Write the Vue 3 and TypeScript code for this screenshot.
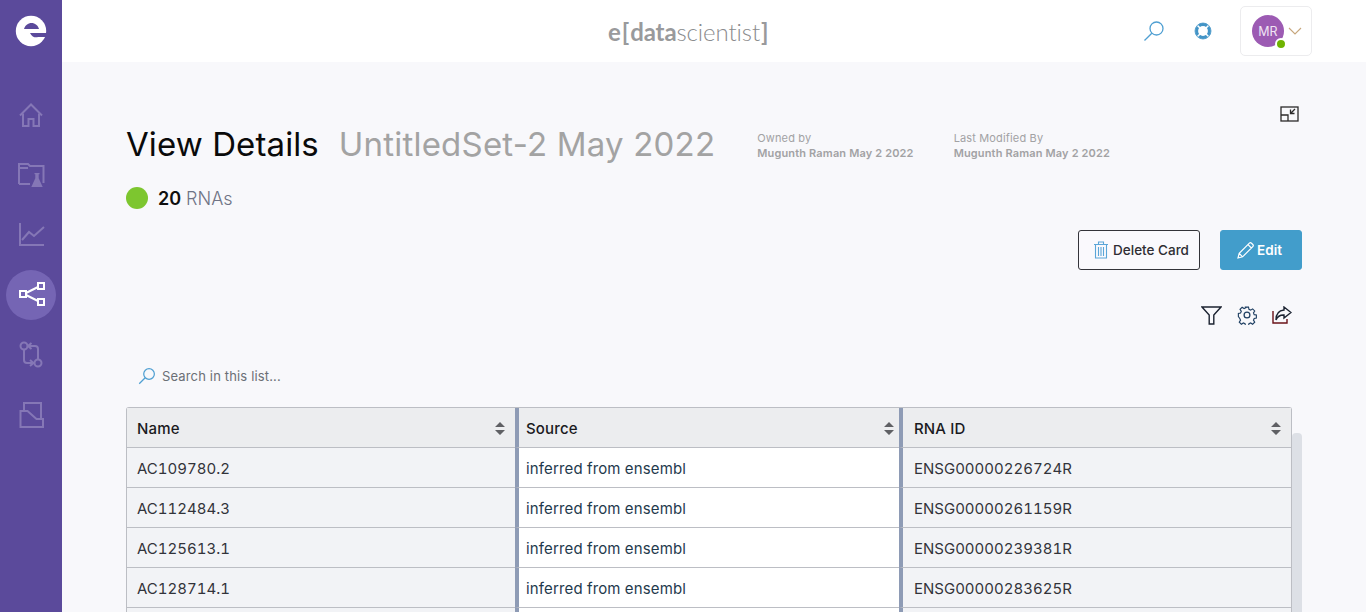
<template>
  <div class="page">
    <aside class="sidebar">
      <div class="brand">
        <svg width="32" height="32" viewBox="0 0 32 32">
          <circle cx="16" cy="16" r="15.200" fill="#fff" />
          <path d="M9 14c1-3.500 4-6 7.500-6s6.500 2.500 7.500 6z" fill="#5b4a9b" />
          <path d="M15 18h17v4h-9c-2 .8-6 .5-8-4z" fill="#5b4a9b" />
        </svg>
      </div>
      <nav class="nav">
        <a v-for="item in navItems" :key="item.name" class="nav-item" :class="{ active: item.active }" :title="item.name">
          <svg width="30" height="30" viewBox="0 0 30 30" fill="none" :stroke="item.active ? '#fff' : '#8577b6'" stroke-width="2">
            <path v-for="(d, i) in item.paths" :key="i" :d="d" />
            <path v-if="item.filled" :d="item.filled" fill="#8577b6" stroke="none" />
          </svg>
        </a>
      </nav>
    </aside>

    <div class="content">
      <header class="topbar">
        <div class="logo"><b class="logo-e">e</b><span class="logo-br">[</span><b>data</b><span class="logo-light">scientist</span><span class="logo-br">]</span></div>
        <div class="top-actions">
          <svg class="top-search" width="22" height="22" viewBox="0 0 22 22" fill="none" stroke="#4f9fd2" stroke-width="1.300">
            <circle cx="13.500" cy="8.500" r="6.500" />
            <path d="M8.800 13.200 1.500 20.500" />
          </svg>
          <svg class="top-help" width="18" height="18" viewBox="0 0 18 18" fill="none">
            <circle cx="9" cy="9" r="6.400" stroke="#4394c6" stroke-width="3" />
            <path d="M3 3l3.500 3.500M15 3l-3.500 3.500M3 15l3.500-3.500M15 15l-3.500-3.500" stroke="#fff" stroke-width="1.500" />
            <circle cx="9" cy="9" r="8" stroke="#4394c6" stroke-width=".8" />
          </svg>
          <div class="user">
            <div class="avatar">MR<span class="presence"></span></div>
            <svg width="14" height="8" viewBox="0 0 14 8" fill="none" stroke="#c7a77c" stroke-width="1.100">
              <path d="M1 1l6 6 6-6" />
            </svg>
          </div>
        </div>
      </header>

      <main class="main">
        <div class="collapse-row">
          <svg width="19" height="16" viewBox="0 0 19 16" fill="none" stroke="#2b2a2a" stroke-width="1.300">
            <rect x="1" y="1" width="17" height="14" />
            <path d="M1 9h7v6" />
            <path d="M15 3l-4.500 4.500M10.500 3.500v4h4" />
          </svg>
        </div>

        <div class="title-row">
          <h1>View Details</h1>
          <h2>UntitledSet-2 May 2022</h2>
          <div class="meta first">
            <span>Owned by</span>
            <b>Mugunth Raman May 2 2022</b>
          </div>
          <div class="meta">
            <span>Last Modified By</span>
            <b>Mugunth Raman May 2 2022</b>
          </div>
        </div>

        <div class="count-row">
          <span class="dot"></span>
          <b>20</b>
          <span class="count-label">RNAs</span>
        </div>

        <div class="button-row">
          <button class="btn btn-outline">
            <svg width="14" height="18" viewBox="0 0 14 18" fill="none" stroke="#5aa5d8" stroke-width="1.100">
              <path d="M0 3.500h14M4.500 3V1h5v2M1.500 3.500V17h11V3.500M4.500 6v9M7 6v9M9.500 6v9" />
            </svg>
            Delete Card
          </button>
          <button class="btn btn-primary">
            <svg width="17" height="17" viewBox="0 0 17 17" fill="none" stroke="#fff" stroke-width="1.200">
              <path d="M1 16l1.200-4.600L12.400 1.200a1.500 1.500 0 0 1 2.100 0l1.300 1.300a1.500 1.500 0 0 1 0 2.100L5.600 14.800zM2.200 11.400l3.400 3.400M11 2.600 14.400 6" />
            </svg>
            Edit
          </button>
        </div>

        <div class="tool-row">
          <svg width="21" height="19" viewBox="0 0 21 19" fill="none" stroke="#1b2230" stroke-width="1.400">
            <path d="M1 1h19l-7.200 8v9H8.200V9z" />
          </svg>
          <svg width="20" height="20" viewBox="0 0 24 24" fill="none" stroke="#1f3f62" stroke-width="1.500">
            <circle cx="12" cy="12" r="3.500" />
            <path d="M10 1.500h4l.6 3 2.300 1 2.600-1.700 2.800 2.800-1.700 2.600 1 2.300 2.900.5v4l-2.900.6-1 2.300 1.700 2.600-2.800 2.800-2.600-1.700-2.300 1-.6 2.900h-4l-.6-2.900-2.300-1-2.600 1.700-2.800-2.800 1.700-2.600-1-2.300L.5 14v-4l2.900-.6 1-2.300L2.700 4.500l2.800-2.800 2.600 1.700 2.300-1z" transform="translate(1.200 1.200) scale(.9)" />
          </svg>
          <svg width="20" height="18" viewBox="0 0 20 18" fill="none" stroke-width="1.400">
            <path d="M1 5v12h14v-4" stroke="#6a1219" />
            <path d="M12 1l7 5.500-7 5.500V9C8 8.800 5.500 10.500 4 14c0-6 3-9.500 8-10z" stroke="#1b2230" />
          </svg>
        </div>

        <div class="list-search">
          <svg width="18" height="18" viewBox="0 0 22 22" fill="none" stroke="#4f9fd2" stroke-width="1.500">
            <circle cx="13.500" cy="8.500" r="6.500" />
            <path d="M8.800 13.200 1.500 20.500" />
          </svg>
          <span>Search in this list...</span>
        </div>

        <div class="table-wrap">
          <div class="table">
            <div class="cell head" v-for="h in headers" :key="h">
              {{ h }}
              <svg width="10" height="13" viewBox="0 0 10 13" fill="#5f6064">
                <path d="M5 0l5 5H0zM5 13l5-5H0z" />
              </svg>
            </div>
            <template v-for="(row, index) in rows" :key="index">
              <div class="cell">{{ row.name }}</div>
              <div class="cell">{{ row.source }}</div>
              <div class="cell">{{ row.id }}</div>
            </template>
          </div>
          <div class="scrollbar"></div>
        </div>
      </main>
    </div>
  </div>
</template>

<script setup lang="ts">
interface NavItem {
  name: string
  paths: string[]
  filled?: string
  active?: boolean
}

interface Row {
  name: string
  source: string
  id: string
}

const navItems: NavItem[] = [
  { name: 'Home', paths: ['M4 15.500 15 4.500l11 11', 'M7 13.500V26h5.500v-7h5v7H23V13.500'] },
  {
    name: 'Projects',
    paths: ['M3 24V4h9l2 2h13.500v17', 'M3 8h9', 'M3 24h11'],
    filled: 'M18.500 13h5v1.300h-.8v4l4 8.700H15.300l4-8.700v-4h-.8z',
  },
  { name: 'Analytics', paths: ['M4 3v22h24', 'M6 20l7-8 5 4 10-9'] },
  {
    name: 'Networks',
    active: true,
    paths: ['M4 11h6v6H4zM22 3h6v6h-6zM22 19h6v6h-6z', 'M10 13l12-6M10 15l12 6'],
  },
  {
    name: 'Compare',
    paths: [
      'M4.500 6a3.500 3.500 0 1 0 7 0a3.500 3.500 0 1 0-7 0',
      'M18.500 23a3.500 3.500 0 1 0 7 0a3.500 3.500 0 1 0-7 0',
      'M8 9.500V20c0 2 1 3 3 3h6.500M14 20l3.500 3-3.500 3',
      'M22 19.500V9c0-2-1-3-3-3h-6.500M15.500 3 12 6l3.500 3',
    ],
  },
  {
    name: 'Archive',
    paths: ['M8 10V3h17v15', 'M4.500 27V11h7l9 8h6.500v8z'],
  },
]

const headers: string[] = ['Name', 'Source', 'RNA ID']

// last row is only a sliver at the fold, its text is below the screenshot
const rows: Row[] = [
  { name: 'AC109780.2', source: 'inferred from ensembl', id: 'ENSG00000226724R' },
  { name: 'AC112484.3', source: 'inferred from ensembl', id: 'ENSG00000261159R' },
  { name: 'AC125613.1', source: 'inferred from ensembl', id: 'ENSG00000239381R' },
  { name: 'AC128714.1', source: 'inferred from ensembl', id: 'ENSG00000283625R' },
  { name: '', source: '', id: '' },
]
</script>

<style>
html,
body {
  margin: 0;
  height: 100%;
  overflow: hidden;
}
</style>

<style scoped>
.page {
  display: flex;
  height: 612px;
  overflow: hidden;
  font-family: Inter, "Liberation Sans", sans-serif;
  background: #f8f8fb;
}
.sidebar {
  flex: 0 0 62px;
  background: #5b4a9b;
}
.brand {
  height: 90px;
  padding: 15px 0 0 15px;
  box-sizing: border-box;
}
.nav {
  display: flex;
  flex-direction: column;
  gap: 10px;
  padding-left: 6px;
}
.nav-item {
  display: flex;
  align-items: center;
  justify-content: center;
  width: 50px;
  height: 50px;
  border-radius: 50%;
}
.nav-item.active {
  background: #7565b4;
}
.content {
  flex: 1;
  min-width: 0;
}
.topbar {
  display: flex;
  align-items: center;
  height: 62px;
  padding: 0 54px 0 546px;
  background: #fff;
  box-sizing: border-box;
}
.logo {
  font-family: Lato, sans-serif;
  font-size: 24px;
  letter-spacing: -0.1px;
  font-variant-ligatures: none;
  color: #999a9c;
  white-space: nowrap;
}
.logo b {
  font-weight: 700;
}
.logo-light {
  font-weight: 300;
  color: #8a8b8d;
}
.logo-br {
  font-weight: 700;
  margin: 0 1px;
}
.top-actions {
  display: flex;
  align-items: center;
  margin-left: auto;
}
.top-help {
  margin-left: 29px;
}
.user {
  display: flex;
  align-items: center;
  gap: 4px;
  width: 72px;
  height: 50px;
  margin-left: 28px;
  padding-left: 11px;
  box-sizing: border-box;
  border: 1px solid #ececee;
  border-radius: 5px;
}
.avatar {
  position: relative;
  display: flex;
  align-items: center;
  justify-content: center;
  width: 32px;
  height: 32px;
  border-radius: 50%;
  background: #9c5bb3;
  color: #f0e4f4;
  font-size: 12.500px;
}
.presence {
  position: absolute;
  right: -3px;
  bottom: -3px;
  width: 8px;
  height: 8px;
  border: 2px solid #fff;
  border-radius: 50%;
  background: #6fb300;
}
.main {
  padding: 44px 64px 0;
}
.collapse-row {
  display: flex;
  justify-content: flex-end;
  height: 16px;
  padding-right: 3px;
}
.title-row {
  display: flex;
  align-items: center;
  height: 44px;
}
h1,
h2 {
  margin: 0;
  font-size: 33px;
  font-weight: 400;
  white-space: nowrap;
}
h1 {
  letter-spacing: 0.1px;
  color: #0a0a0a;
}
h2 {
  margin-left: 20px;
  letter-spacing: 0.2px;
  color: #a3a3a3;
}
.meta {
  display: flex;
  flex-direction: column;
  margin-top: 4px;
  margin-left: 40px;
  font-size: 11px;
  line-height: 15px;
  letter-spacing: 0.15px;
  color: #a2a2a4;
}
.meta.first {
  margin-left: 42px;
}
.meta b {
  font-weight: 600;
}
.count-row {
  display: flex;
  align-items: center;
  height: 24px;
  margin-top: 20px;
  font-size: 18px;
}
.dot {
  width: 22px;
  height: 22px;
  border-radius: 50%;
  background: #7dc62f;
  margin-right: 10px;
}
.count-row b {
  font-weight: 600;
  color: #0f0f0f;
}
.count-label {
  margin-left: 5px;
  font-weight: 300;
  color: #6f7385;
}
.button-row {
  display: flex;
  justify-content: flex-end;
  gap: 20px;
  margin-top: 20px;
}
.btn {
  display: flex;
  align-items: center;
  justify-content: center;
  gap: 5px;
  height: 40px;
  border-radius: 3px;
  font-family: inherit;
  font-size: 13.500px;
  font-weight: 500;
}
.btn-outline {
  width: 122px;
  padding: 0 0 0 5px;
  border: 1px solid #34343a;
  background: #faf9fd;
  color: #2e2d33;
}
.btn-primary {
  width: 82px;
  gap: 3px;
  padding: 0 3px 0 0;
  border: 1px solid #429dcb;
  background: #429dcb;
  color: #fff;
  font-weight: 600;
}
.tool-row {
  display: flex;
  justify-content: flex-end;
  align-items: center;
  gap: 15px;
  height: 22px;
  margin-top: 34px;
  padding-right: 10px;
}
.list-search {
  display: flex;
  align-items: center;
  gap: 6px;
  height: 20px;
  margin-top: 40px;
  padding-left: 12px;
  font-size: 13px;
  letter-spacing: 0.15px;
  color: #6b6f76;
}
.table-wrap {
  display: flex;
  margin-top: 21px;
}
.table {
  display: grid;
  grid-template-columns: 388px 384px 392px;
  width: 1164px;
  border: 1px solid #bcbec4;
  border-bottom: 0;
  border-radius: 3px 3px 0 0;
}
.cell {
  display: flex;
  align-items: center;
  justify-content: space-between;
  height: 40px;
  padding: 1px 10px 0;
  box-sizing: border-box;
  border-bottom: 1px solid #bcbec4;
  background: #f2f3f6;
  font-size: 15px;
  font-variant-numeric: tabular-nums;
  color: #32333a;
}
.cell:nth-child(3n + 2) {
  background: #fff;
  border-left: 4px solid #8e9bb5;
  padding-left: 7px;
  padding-right: 5px;
  letter-spacing: 0.15px;
  color: #1f3a4d;
}
.cell:nth-child(3n) {
  border-left: 4px solid #8e9bb5;
  padding-left: 11px;
}
.cell.head {
  background: #ecedef;
  color: #1a1a1e;
  font-weight: 500;
  letter-spacing: 0.15px;
}
.scrollbar {
  width: 10px;
  height: 180px;
  margin-top: 26px;
  background: #dde0e6;
  border-radius: 4px 4px 0 0;
}
</style>
